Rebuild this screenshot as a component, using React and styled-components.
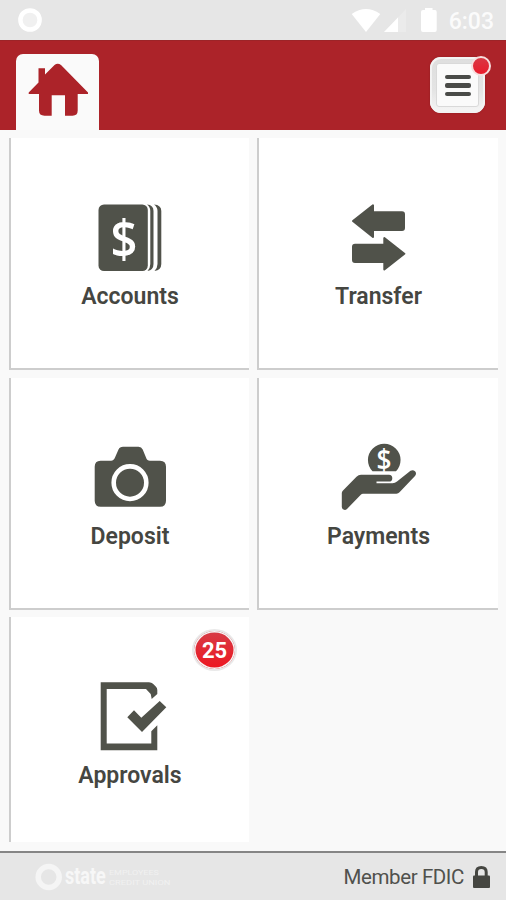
import React from 'react'
import styled, { createGlobalStyle } from 'styled-components'

const GlobalStyle = createGlobalStyle`
  * {
    box-sizing: border-box;
  }
  body {
    margin: 0;
    font-family: Roboto, "Liberation Sans", sans-serif;
    background-color: #f9f9f9;
  }
  svg {
    display: block;
    flex-shrink: 0;
  }
`;

const Container = styled.div`
  width: 506px;
  height: 900px;
  display: flex;
  flex-direction: column;
  overflow: hidden;
  background-color: #f9f9f9;
`;

const StatusBar = styled.div`
  height: 40px;
  flex-shrink: 0;
  display: flex;
  align-items: center;
  justify-content: space-between;
  padding: 0 12px 0 18px;
  background-color: #e6e6e6;
`;

const StatusIcons = styled.div`
  display: flex;
  align-items: center;
`;

const Time = styled.span`
  margin-left: 12px;
  padding-top: 3px;
  font-size: 23px;
  line-height: 28px;
  font-weight: 500;
  color: #fbfbfb;
`;

const Header = styled.div`
  height: 90px;
  flex-shrink: 0;
  display: flex;
  align-items: flex-end;
  justify-content: space-between;
  padding: 0 21px 0 16px;
  border-top: 1px solid #9c2428;
  background-color: #ac2329;
`;

const HomeTab = styled.div`
  width: 83px;
  height: 76px;
  padding: 8px 0 0 12px;
  border-radius: 7px 7px 0 0;
  background-color: #fafafa;
`;

const MenuButton = styled.button`
  position: relative;
  width: 55px;
  height: 56px;
  margin-bottom: 17px;
  padding: 6px;
  border: none;
  border-radius: 11px;
  background: linear-gradient(#dedede, #e4e4e4 60%, #f6f6f6);
  box-shadow: inset 0 0 0 2px #f3f3f3, 0 0 2px #8d1c21;
`;

const MenuLines = styled.div`
  height: 44px;
  display: flex;
  flex-direction: column;
  align-items: center;
  justify-content: center;
  gap: 4px;
  padding-top: 1px;
  border: 1px solid #d9d9d9;
  border-radius: 3px;
  background-color: #fafafa;
`;

const Line = styled.span`
  width: 26px;
  height: 4.5px;
  border-radius: 2px;
  background-color: #4a4b48;
`;

const Dot = styled.span`
  position: absolute;
  top: -1px;
  right: -6px;
  width: 20px;
  height: 20px;
  border: 2px solid #f6dede;
  border-radius: 50%;
  background: linear-gradient(#d93743, #ea1c2c);
`;

const Tiles = styled.div`
  flex: 1;
  display: grid;
  grid-template-columns: 240px 241px;
  grid-template-rows: 232px 232px 225px;
  gap: 8px;
  row-gap: 7.5px;
  padding: 8px 8px 0 9px;
`;

const Tile = styled.div`
  position: relative;
  display: flex;
  flex-direction: column;
  align-items: center;
  padding-top: 62px;
  border-left: 2px solid #cdcdcd;
  border-bottom: ${(props) => (props.$last ? "none" : "2px solid #cdcdcd")};
  background-color: #fff;
`;

const Label = styled.span`
  font-size: 23px;
  font-weight: 600;
  line-height: 33px;
  color: #454641;
`;

const Badge = styled.span`
  position: absolute;
  top: 12px;
  right: 12px;
  width: 45px;
  height: 42px;
  display: flex;
  align-items: center;
  justify-content: center;
  border: 2px solid #e9e9e9;
  border-radius: 50%;
  background: linear-gradient(#d63c47, #ee1620);
  box-shadow: inset 0 0 0 1.5px #f6f6f6;
  color: #fff;
  font-size: 22px;
  font-weight: 700;
`;

const Footer = styled.div`
  height: 49px;
  flex-shrink: 0;
  display: flex;
  align-items: center;
  justify-content: space-between;
  padding: 0 15px 0 35px;
  border-top: 2px solid #858585;
  background-color: #e6e6e6;
`;

const Member = styled.div`
  display: flex;
  align-items: center;
  gap: 8px;
  font-size: 20.5px;
  letter-spacing: -0.4px;
  color: #50514d;
`;

const dark = "#50524a";

const Icon = ({ children }) => (
  <svg width="80" height="80" viewBox="0 0 80 80" fill={dark}>{children}</svg>
);

const AccountsIcon = () => (
  <Icon>
    <rect x="8.5" y="4.5" width="49.3" height="66.5" rx="5.5" />
    <path d="M57 4.5Q63.5 5 63.5 11V64Q63.5 70 57.5 71Q60.3 68 60.3 64V11Q60.3 7 57 4.5Z" />
    <path d="M64 4.5Q71.3 5 71.3 11V64Q71.3 70 64.5 71Q67.5 68 67.5 64V11Q67.5 7 64 4.5Z" />
    <text x="34" y="57.5" fill="#fff" textAnchor="middle" fontFamily="Open Sans, sans-serif" fontWeight="600" fontSize="53" textLength="27" lengthAdjust="spacingAndGlyphs">$</text>
  </Icon>
);

const TransferIcon = () => (
  <Icon>
    <g stroke={dark} strokeWidth="2" strokeLinejoin="round">
      <path d="M14 21L34 5.3V12.3H63Q65 12.3 65 14.3V28Q65 30 63 30H34V37Z" />
      <path d="M65.3 53.7L45.3 38V44.8H16Q14 44.8 14 46.8V60Q14 62 16 62H45.3V69.5Z" />
    </g>
  </Icon>
);

const DepositIcon = () => (
  <Icon>
    <path d="M10.5 20.7H21Q24 20.5 25 17.5L28.5 9.5Q29.7 6.8 33 6.8H48.5Q51.5 6.8 52.7 9.5L56 17.5Q57 20.7 60 20.7H70Q76 20.7 76 26.7V60.7Q76 66.7 70 66.7H10.7Q4.7 66.7 4.7 60.7V26.7Q4.7 20.7 10.5 20.7Z" />
    <circle cx="40" cy="42.7" r="16.3" fill="none" stroke="#fff" strokeWidth="4.6" />
  </Icon>
);

const PaymentsIcon = () => (
  <Icon>
    <path d="M33.5 31.3A16.3 16.3 0 1 1 57 31.3Z" />
    <text x="45" y="29.5" fill="#fff" textAnchor="middle" fontFamily="Open Sans, sans-serif" fontWeight="600" fontSize="29" textLength="15" lengthAdjust="spacingAndGlyphs">$</text>
    <path d="M2.8 53Q2.8 51.5 4 50.4L17.5 36.7Q19.5 34.7 22 34.7H50Q53.3 34.7 53.3 38.2Q53.3 41.6 50 41.6H37.5V43.2H53.5Q56 43.2 58 41.5L71.5 30.8Q74 29.4 76 31.3Q78 33.5 76 36L60.5 52.3Q59.2 53.7 57.5 53.7H24Q22.8 53.7 21.8 54.7L8 69Q6.3 70.6 4.5 69.6Q2.8 68.8 2.8 67Z" />
  </Icon>
);

const ApprovalsIcon = () => (
  <Icon>
    <path d="M10.7 3.3H59Q61.5 3.3 63 4.8L66 7.8Q67.3 9.2 67.3 11V15L61.7 20L60.7 15L56 10H16.7V64.5H61.3V52.3L67.3 46.3V71.3H10.7Z" />
    <path d="M37.3 38.3L44 31.3L51.3 38.7L69.7 22L76.3 28.3L52 53Z" />
  </Icon>
);

const tiles = [
  { label: "Accounts", icon: <AccountsIcon /> },
  { label: "Transfer", icon: <TransferIcon /> },
  { label: "Deposit", icon: <DepositIcon /> },
  { label: "Payments", icon: <PaymentsIcon /> },
  { label: "Approvals", icon: <ApprovalsIcon />, badge: 25, last: true },
];

function App() {
  return (
    <Container>
      <GlobalStyle />
      <StatusBar>
        <svg width="24" height="24" viewBox="0 0 24 24">
          <circle cx="12" cy="12" r="9.6" fill="#f0f0f0" stroke="#fff" strokeWidth="4.5" />
        </svg>
        <StatusIcons>
          <svg width="86" height="26" viewBox="351 7 86 26" fill="#fff">
            <path d="M351.7 14Q366 4 380.3 14L366 32Z" />
            <path d="M406 9V32H384Z" fill="#ebebeb" />
            <path d="M398 17.5V32H384Z" />
            <path d="M425 10V8H432.5V10H435Q436.7 10 436.7 12V30Q436.7 32 435 32H423Q421 32 421 30V12Q421 10 423 10Z" />
          </svg>
          <Time>6:03</Time>
        </StatusIcons>
      </StatusBar>
      <Header>
        <HomeTab>
          <svg width="61" height="56" viewBox="0 0 61 56" fill="#ac2329">
            <path d="M26.5 3Q29.7 0.5 33 3L60 30.5V32H49.7V48.5Q49.7 53.7 44.5 53.7H37V33.3H23.7V53.7H16.5Q11 53.7 11 48.5V32H0.7V30.5L10.5 20.5V6.3H17V12.5Z" />
          </svg>
        </HomeTab>
        <MenuButton>
          <MenuLines>
            <Line />
            <Line />
            <Line />
          </MenuLines>
          <Dot />
        </MenuButton>
      </Header>
      <Tiles>
        {tiles.map((tile) => (
          <Tile key={tile.label} $last={tile.last}>
            {tile.icon}
            <Label>{tile.label}</Label>
            {tile.badge && <Badge>{tile.badge}</Badge>}
          </Tile>
        ))}
      </Tiles>
      <Footer>
        <svg width="142" height="30" viewBox="35 861 142 30" fill="#f7f7f7">
          <circle cx="48.7" cy="876" r="10.5" fill="none" stroke="#f5f5f5" strokeWidth="5.5" />
          <text transform="translate(65 883) scale(0.75 1)" fontSize="24" fontWeight="700">state</text>
          <text transform="translate(109 873.5) scale(1.28 1)" fontSize="7" fill="#f1f1f1">EMPLOYEES</text>
          <text transform="translate(109 883.5) scale(1.33 1)" fontSize="7" fill="#f1f1f1">CREDIT UNION</text>
        </svg>
        <Member>
          Member FDIC
          <svg width="19" height="24" viewBox="0 0 19 24">
            <path d="M4.5 12V7Q4.5 2.5 9.3 2.5Q14.2 2.5 14.2 7V12" fill="none" stroke="#454641" strokeWidth="3" />
            <rect x="1" y="10.5" width="17" height="12.5" rx="1" fill="#454641" />
          </svg>
        </Member>
      </Footer>
    </Container>
  )
}

export default App
